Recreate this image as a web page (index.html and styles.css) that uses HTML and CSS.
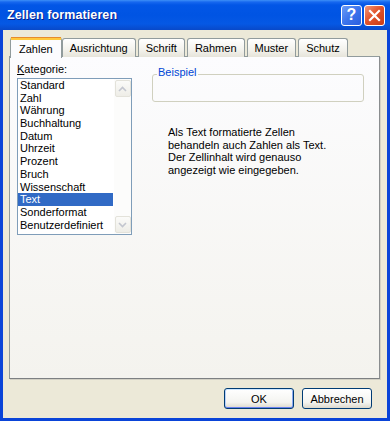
FILE: index.html
```html
<!DOCTYPE html>
<html lang="de">
<head>
  <meta charset="UTF-8" />
  <title>Zellen formatieren</title>
  <link rel="stylesheet" href="styles.css">
</head>
<body>
  <div class="window">
    <div class="titlebar">
      <span class="title">Zellen formatieren</span>
      <div class="caption-btns">
        <span class="cap help">?</span>
        <span class="cap close">
          <svg width="13" height="13" viewBox="0 0 13 13">
            <path d="M2 2 L11 11 M11 2 L2 11" stroke="#fff" stroke-width="2.2" stroke-linecap="square" />
          </svg>
        </span>
      </div>
    </div>

    <div class="client">
      <div class="tabs">
        <div class="tab active">Zahlen</div>
        <div class="tab">Ausrichtung</div>
        <div class="tab">Schrift</div>
        <div class="tab">Rahmen</div>
        <div class="tab">Muster</div>
        <div class="tab">Schutz</div>
      </div>

      <div class="panel">
        <div class="left-col">
          <div class="label"><u>K</u>ategorie:</div>
          <div class="listbox">
            <ul class="list">
              <li>Standard</li>
              <li>Zahl</li>
              <li>Währung</li>
              <li>Buchhaltung</li>
              <li>Datum</li>
              <li>Uhrzeit</li>
              <li>Prozent</li>
              <li>Bruch</li>
              <li>Wissenschaft</li>
              <li class="selected">Text</li>
              <li>Sonderformat</li>
              <li>Benutzerdefiniert</li>
            </ul>
            <div class="scrollbar">
              <span class="sb-btn">
                <svg width="9" height="6" viewBox="0 0 9 6"><path d="M1 5 L4.5 1.5 L8 5" fill="none" stroke="#c3c6cf" stroke-width="1.6" /></svg>
              </span>
              <span class="sb-btn">
                <svg width="9" height="6" viewBox="0 0 9 6"><path d="M1 1 L4.5 4.5 L8 1" fill="none" stroke="#c3c6cf" stroke-width="1.6" /></svg>
              </span>
            </div>
          </div>
        </div>

        <div class="right-col">
          <div class="group">
            <div class="group-label">Beispiel</div>
          </div>
          <p class="desc">
            Als Text formatierte Zellen<br>
            behandeln auch Zahlen als Text.<br>
            Der Zellinhalt wird genauso<br>
            angezeigt wie eingegeben.
          </p>
        </div>
      </div>

      <div class="actions">
        <button class="btn default">OK</button>
        <button class="btn">Abbrechen</button>
      </div>
    </div>
  </div>
</body>
</html>
```

FILE: styles.css
```css
html, body {
  margin: 0;
  padding: 0;
  background-color: #ece9d8;
  font-family: "Liberation Sans", Arial, sans-serif;
  font-size: 11px;
  color: #000;
}

.window {
  width: 390px;
  height: 421px;
  display: flex;
  flex-direction: column;
}

/* title bar */
.titlebar {
  height: 30px;
  flex: none;
  display: flex;
  align-items: center;
  justify-content: space-between;
  padding: 0 5px 0 7px;
  background: linear-gradient(to bottom, #3d8ff7 0, #1768ef 2px, #0256e6 5px, #0054e3 50%, #0558e4 80%, #0849c9 100%);
}

.title {
  color: #fff;
  font-weight: bold;
  font-size: 12.5px;
  text-shadow: 1px 1px 0 #0a1e8a;
  letter-spacing: 0.1px;
}

.caption-btns {
  display: flex;
  gap: 2px;
}

.cap {
  width: 19px;
  height: 19px;
  border: 1px solid #fff;
  border-radius: 3px;
  display: flex;
  align-items: center;
  justify-content: center;
  color: #fff;
}

.help {
  background: linear-gradient(135deg, #6b9cf7 0, #3c74ec 50%, #2a5fdf 100%);
  font-weight: bold;
  font-size: 16px;
}

.close {
  background: linear-gradient(135deg, #f0987a 0, #e2542c 45%, #c93c15 100%);
}

/* client area */
.client {
  flex: 1;
  display: flex;
  flex-direction: column;
  padding: 6px 7px 0 6px;
  border: 3px solid #0a44d8;
  border-top: none;
  background-color: #ece9d8;
}

.tabs {
  display: flex;
  align-items: flex-end;
  height: 21px;
  padding-left: 1px;
  position: relative;
  z-index: 1;
}

.tab {
  height: 18px;
  line-height: 18px;
  padding: 0 7px;
  margin-right: 2px;
  border: 1px solid #919b9c;
  border-bottom: none;
  border-radius: 3px 3px 0 0;
  background: linear-gradient(to bottom, #fff, #f3f2ec 60%, #e6e4da);
}

.tab.active {
  height: 18px;
  line-height: 18px;
  padding: 0 8px;
  margin-right: 0;
  margin-bottom: -1px;
  border-top: 3px solid #ffc83c;
  background: #fcfcfe;
  position: relative;
}

.tab.active::before {
  content: "";
  position: absolute;
  left: 0;
  right: 0;
  top: -3px;
  height: 1px;
  background: #e68b2c;
}

.panel {
  height: 323px;
  margin-top: -1px;
  border: 1px solid #919b9c;
  border-right-color: #8a8d8f;
  border-bottom-color: #7d8082;
  box-shadow: 1px 1px 0 #d2d0c4;
  background: linear-gradient(to bottom, #fcfcfe, #f4f3ee);
  box-sizing: border-box;
  display: flex;
  gap: 20px;
  padding: 6px 0 0 7px;
}

.left-col {
  width: 115px;
  display: flex;
  flex-direction: column;
}

.label {
  line-height: 13px;
  margin-bottom: 2px;
}

.listbox {
  height: 155px;
  border: 1px solid #7f9db9;
  background: #fff;
  display: flex;
}

.list {
  flex: 1;
  list-style: none;
  margin: 0;
  padding: 0 1px 0 0;
}

.list li {
  height: 12.7px;
  line-height: 12.7px;
  padding-left: 2px;
  white-space: nowrap;
}

.list li.selected {
  background-color: #316ac5;
  color: #fff;
}

.scrollbar {
  width: 17px;
  display: flex;
  flex-direction: column;
  justify-content: space-between;
  align-items: center;
  padding: 1px 0;
  background: #fcfcfb;
}

.sb-btn {
  width: 14px;
  height: 15px;
  border: 1px solid #e3e2da;
  border-radius: 2px;
  background: linear-gradient(to bottom, #fbfbf9, #eeede7);
  display: flex;
  align-items: center;
  justify-content: center;
}

.right-col {
  width: 212px;
}

.group {
  margin-top: 11px;
  height: 28px;
  border: 1px solid #d0d0bf;
  border-radius: 3px;
  box-sizing: border-box;
}

.group-label {
  width: fit-content;
  margin: -9px 0 0 4px;
  padding: 0 1px;
  line-height: 13px;
  color: #0046d5;
  background: #fbfbfc;
}

.desc {
  margin: 24px 0 0 16px;
  line-height: 12.7px;
}

/* dialog buttons */
.actions {
  display: flex;
  justify-content: flex-end;
  gap: 8px;
  padding: 9px 8px 0 0;
}

.btn {
  width: 70px;
  height: 21px;
  padding: 0;
  border: 1px solid #003c74;
  border-radius: 3px;
  background: linear-gradient(to bottom, #fff, #f4f4f0 70%, #dcd8cc);
  font-family: "Liberation Sans", Arial, sans-serif;
  font-size: 11px;
  color: #000;
}

.btn.default {
  box-shadow: inset 0 1px 0 #cee7ff, inset 0 -1px 0 #6982ee, inset 1px 0 0 #b9d1fa, inset -1px 0 0 #8ba9f2;
}
```
